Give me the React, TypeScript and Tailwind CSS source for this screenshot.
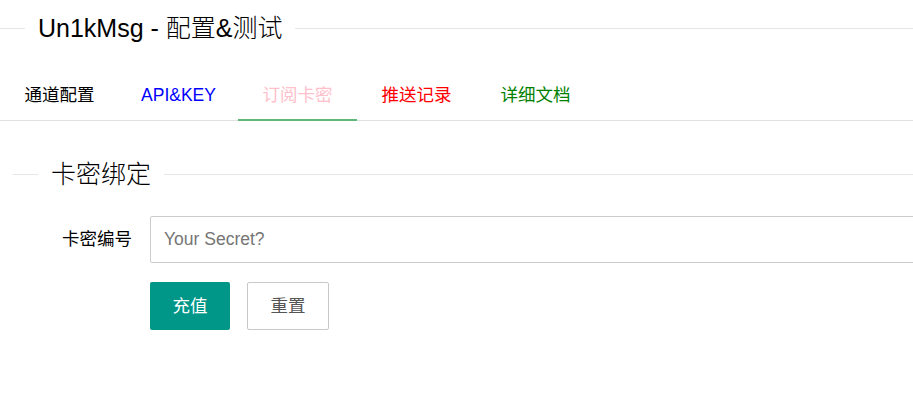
import React from "react";

const tabs = [
  { label: "通道配置", color: "text-black" },
  { label: "API&KEY", color: "text-[#0000ff]" },
  { label: "订阅卡密", color: "text-[#ffc0cb]", active: true },
  { label: "推送记录", color: "text-[#ff0000]" },
  { label: "详细文档", color: "text-[#008000]" },
];

const FieldTitle = ({ title, offset }: { title: string; offset: string }) => (
  <div className={`flex h-[40px] items-center ${offset}`}>
    <div className="h-px w-[25px] bg-[#e6e6e6]" />
    <span className="px-[13px] text-[25px] font-light leading-none text-black">{title}</span>
    <div className="h-px flex-1 bg-[#e6e6e6]" />
  </div>
);

const App = () => {
  return (
    <div className="min-h-[402px] w-full overflow-hidden bg-white font-['Liberation_Sans','Noto_Sans_CJK_SC',sans-serif] text-[17.5px]">
      <div className="pt-[8px]">
        <FieldTitle title="Un1kMsg - 配置&测试" offset="" />
      </div>

      <ul className="mt-[22px] flex h-[51px] border-b border-[#e2e2e2]">
        {tabs.map((t) => (
          <li
            key={t.label}
            className={`relative flex w-[119px] cursor-pointer items-center justify-center ${t.color}`}
          >
            {t.label}
            {t.active && <span className="absolute bottom-[-1px] left-0 h-[2px] w-full bg-[#5fb878]" />}
          </li>
        ))}
      </ul>

      <div className="mt-[33px]">
        <FieldTitle title="卡密绑定" offset="ml-[13px]" />
      </div>

      <div className="mt-[22px] flex h-[47px] items-center">
        <label className="w-[150px] shrink-0 whitespace-nowrap pr-[18px] text-right text-black">卡密编号</label>
        <input
          className="h-[47px] w-[900px] shrink-0 rounded-[2px] border border-[#cccccc] pl-[13px] text-[17.5px] outline-none placeholder:text-[#757575]"
          placeholder="Your Secret?"
        />
      </div>

      <div className="ml-[150px] mt-[19px] flex gap-[17px]">
        <button className="h-[48px] w-[80px] rounded-[2px] bg-[#009688] text-white">充值</button>
        <button className="h-[48px] w-[82px] rounded-[2px] border border-[#c9c9c9] bg-white text-[#555555]">重置</button>
      </div>
    </div>
  );
};

export default App;
